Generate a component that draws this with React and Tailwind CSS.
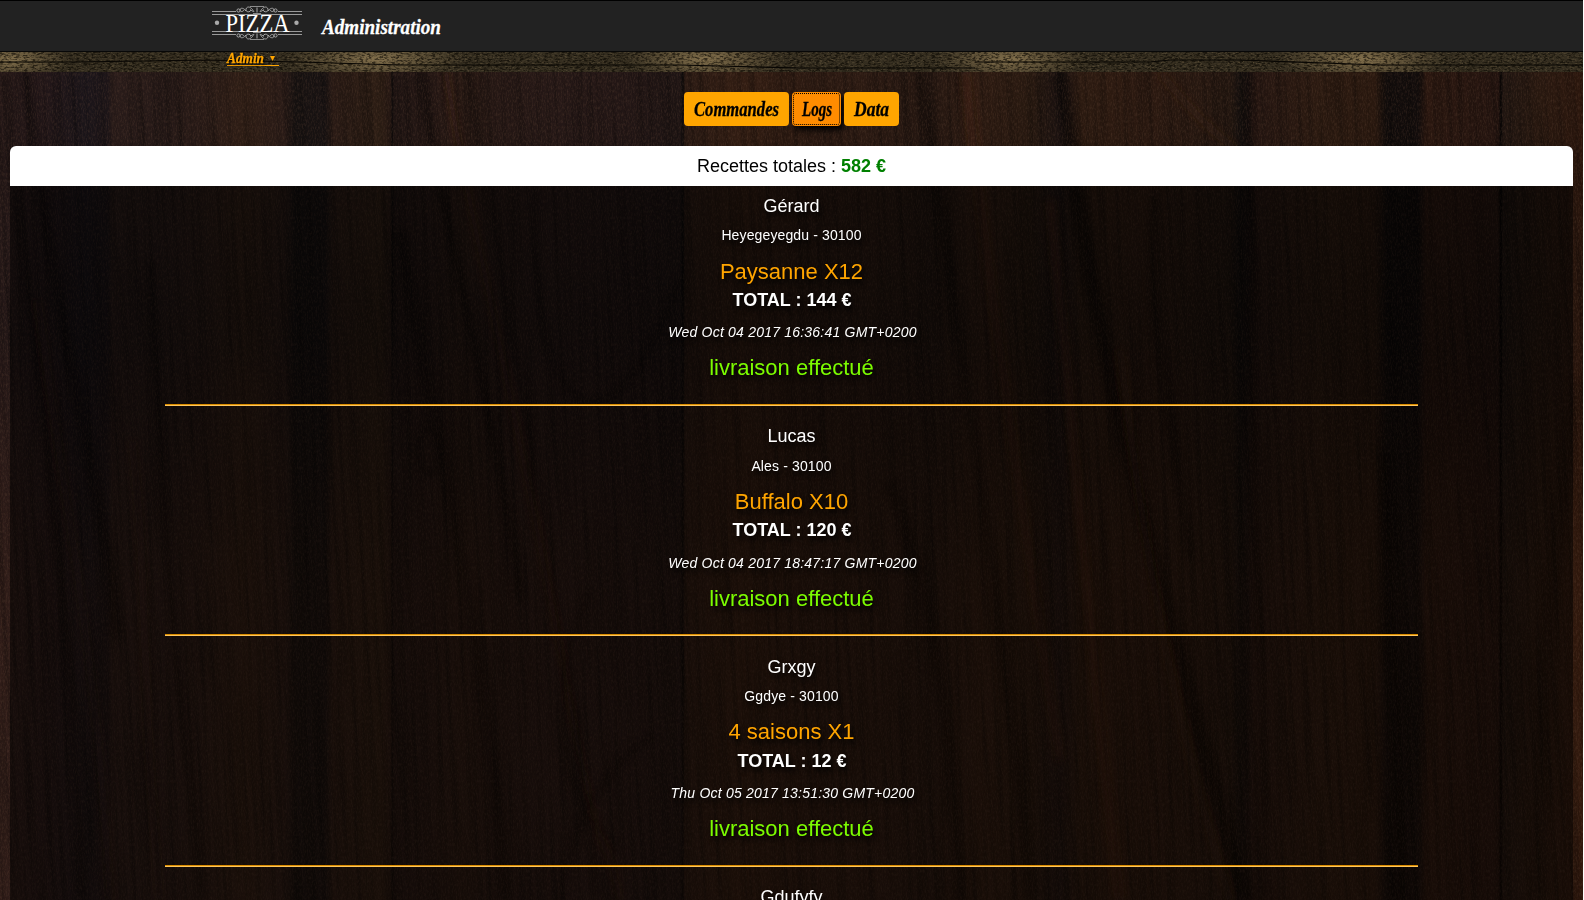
const orders = [
  { name: "Gérard", place: "Heyegeyegdu - 30100", item: "Paysanne X12", total: "144", date: "Wed Oct 04 2017 16:36:41 GMT+0200" },
  { name: "Lucas", place: "Ales - 30100", item: "Buffalo X10", total: "120", date: "Wed Oct 04 2017 18:47:17 GMT+0200" },
  { name: "Grxgy", place: "Ggdye - 30100", item: "4 saisons X1", total: "12", date: "Thu Oct 05 2017 13:51:30 GMT+0200" },
  { name: "Gdufyfy" },
];

// [x position in px, colour] across the planks
const planks = [
  [0, "#2c1d1c"], [45, "#24181a"], [85, "#1d171c"], [108, "#1e1619"], [112, "#2b1d1b"], [165, "#281b19"],
  [200, "#2c1d19"], [245, "#322017"], [285, "#2c1d19"], [295, "#181312"], [325, "#1a1414"], [333, "#2d1d17"],
  [380, "#302016"], [391, "#291a15"], [392, "#100c0c"], [394, "#211614"], [430, "#271916"], [460, "#2c1c16"],
  [500, "#271916"], [550, "#281a18"], [620, "#251817"], [680, "#201615"], [683, "#0d0a0a"], [685, "#2d1c15"],
  [740, "#351f14"], [820, "#2d1b13"], [870, "#2e1c14"], [930, "#261812"], [980, "#321e14"], [1030, "#291a11"],
  [1060, "#1f1513"], [1080, "#2e1c12"], [1110, "#2f1c12"], [1150, "#2e1b12"], [1230, "#251811"], [1240, "#15100e"],
  [1248, "#1b1210"], [1254, "#281813"], [1320, "#2e1c12"], [1375, "#2c1a10"], [1387, "#120d0c"], [1418, "#140e0d"],
  [1426, "#2d1911"], [1498, "#271611"], [1501, "#060404"], [1503, "#221712"], [1540, "#2b1a11"], [1583, "#2f190f"],
];

const streaks = [
  ["M5 72C20 300 60 420 82 900", 8, "#050406", 0.5],
  ["M25 72C60 360 100 480 118 640", 12, "#050406", 0.45],
  ["M38 300C60 480 96 640 110 900", 7, "#4a2a1a", 0.3],
  ["M150 260C160 500 180 700 205 900", 8, "#050304", 0.5],
  ["M132 440C150 600 140 700 160 900", 8, "#4a2a18", 0.25],
  ["M420 72C450 260 500 430 520 600", 8, "#050304", 0.6],
  ["M400 230C430 420 480 600 505 900", 14, "#050304", 0.4],
  ["M446 72C470 220 510 380 560 650S600 800 620 900", 6, "#4e2b1a", 0.4],
  ["M470 72C500 300 560 560 600 900", 6, "#050304", 0.4],
  ["M535 190C535 300 545 380 580 398S650 360 680 280", 7, "#030202", 0.4],
  ["M560 900C570 820 610 760 655 735", 9, "#030202", 0.4],
  ["M590 590C540 700 560 800 620 850", 8, "#030202", 0.35],
  ["M920 72C950 300 1000 560 1030 900", 12, "#050304", 0.45],
  ["M965 72C985 260 1020 500 1060 760", 9, "#5a2f18", 0.45],
  ["M890 480C930 600 950 700 960 900", 14, "#050304", 0.4],
  ["M1060 72C1090 280 1110 400 1170 620S1210 780 1245 900", 16, "#030202", 0.6],
  ["M1050 200C1080 500 1095 700 1120 900", 10, "#5e2f18", 0.45],
  ["M1120 350C1150 600 1180 740 1230 900", 7, "#55301a", 0.35],
  ["M1155 195C1145 300 1170 400 1190 560", 10, "#020101", 0.4],
  ["M1160 72C1190 110 1210 130 1235 148", 7, "#55301a", 0.35],
  ["M1384 450C1385 620 1405 700 1400 900", 10, "#020101", 0.5],
  ["M1248 72C1250 400 1264 620 1266 900", 5, "#020101", 0.6],
  ["M1580 380C1560 500 1540 600 1540 900", 16, "#030202", 0.3],
];

function Backdrop() {
  return (
    <svg className="absolute inset-0 h-[900px] w-[1583px]" viewBox="0 0 1583 900" aria-hidden="true">
      <defs>
        <linearGradient id="planks">
          {planks.map(([x, c]) => <stop key={x} offset={x / 1583} stopColor={c} />)}
        </linearGradient>
        <linearGradient id="fade" x2="0" y2="1">
          <stop offset="0" stopColor="#000" stopOpacity="0" />
          <stop offset=".35" stopColor="#000" stopOpacity=".2" />
          <stop offset=".65" stopColor="#3d1c0a" stopOpacity=".2" />
          <stop offset="1" stopColor="#3d1c0a" stopOpacity=".2" />
        </linearGradient>
        <filter id="soft" x="-50%" width="200%"><feGaussianBlur stdDeviation="3.5" /></filter>
        <filter id="grain" x="0" y="0" width="100%" height="100%" colorInterpolationFilters="sRGB">
          <feTurbulence type="fractalNoise" baseFrequency=".2 .006" numOctaves="3" seed="4" />
          <feColorMatrix values="0 0 0 0 0  0 0 0 0 0  0 0 0 0 0  2.2 0 0 0 -.9" />
        </filter>
        <filter id="pores" x="0" y="0" width="100%" height="100%" colorInterpolationFilters="sRGB">
          <feTurbulence type="fractalNoise" baseFrequency=".8 .3" numOctaves="2" seed="9" />
          <feColorMatrix values="0 0 0 0 .5  0 0 0 0 .36  0 0 0 0 .28  0 1.2 0 0 -.5" />
        </filter>
      </defs>
      <rect width="1583" height="900" fill="url(#planks)" />
      <g fill="none" filter="url(#soft)" opacity=".75">
        {streaks.map(([d, w, c, o]) => <path key={d} d={d} strokeWidth={w} stroke={c} opacity={o} />)}
        <ellipse cx="429" cy="450" rx="10" ry="24" stroke="#000" strokeWidth="6" opacity=".5" />
      </g>
      <rect width="1583" height="900" fill="url(#fade)" />
      <g transform="rotate(-3 790 450)"><rect x="-60" y="-80" width="1720" height="1060" filter="url(#grain)" opacity=".32" /></g>
      <rect width="1583" height="900" filter="url(#pores)" opacity=".42" />
    </svg>
  );
}

const glows = [[10, 60], [376, 90], [705, 80], [1010, 75], [1362, 85]];

function WoodStrip() {
  return (
    <svg className="absolute inset-0 h-5 w-[1583px]" viewBox="0 0 1583 20" aria-hidden="true">
      <defs>
        <radialGradient id="glow">
          <stop offset="0" stopColor="#8a7650" stopOpacity=".9" />
          <stop offset="1" stopColor="#8a7650" stopOpacity="0" />
        </radialGradient>
        <filter id="bark" x="0" y="0" width="100%" height="100%" colorInterpolationFilters="sRGB">
          <feTurbulence type="fractalNoise" baseFrequency=".25 .6" numOctaves="3" seed="3" />
          <feColorMatrix values="0 0 0 0 .03  0 0 0 0 .02  0 0 0 0 0  4 0 0 0 -1.75" />
        </filter>
        <filter id="flecks" x="0" y="0" width="100%" height="100%" colorInterpolationFilters="sRGB">
          <feTurbulence type="fractalNoise" baseFrequency=".4 .7" numOctaves="2" seed="12" />
          <feColorMatrix values="0 0 0 0 .56  0 0 0 0 .48  0 0 0 0 .34  0 3 0 0 -1.5" />
        </filter>
      </defs>
      <rect width="1583" height="20" fill="#352e20" />
      {glows.map(([x, r]) => <ellipse key={x} cx={x} cy="7" rx={r} ry="22" fill="url(#glow)" />)}
      <rect width="1583" height="20" filter="url(#bark)" opacity=".6" />
      <rect width="1583" height="20" filter="url(#flecks)" opacity=".35" />
      <path d="M0 10H75L210 8 300 10 400 13 528 13M528 13 680 13 800 16 975 16M975 10 1150 10 1170 8 1240 8 1380 13 1583 13" fill="none" stroke="#080603" strokeWidth="1.2" />
    </svg>
  );
}

function Flourish() {
  return (
    <g fill="none" stroke="#a8a8a8" strokeWidth="1">
      <path d="M45 2.5v5M42 7C39 1 35 1 34 4s4 4 5 1M48 7c3-6 7-6 8-3s-4 4-5 1" />
      <path d="M34 6C31 2 28 3 28 5s3 2 4 0M56 6c3-4 6-3 6-1s-3 2-4 0" />
      <circle cx="26.5" cy="5.5" r="1.6" /><circle cx="63.5" cy="5.5" r="1.6" />
      <path d="M38 1.5h14M41 8.5h8M38 4.5l3 2M52 4.5l-3 2" strokeWidth=".8" />
    </g>
  );
}

function Logo() {
  return (
    <svg className="h-9 w-[90px]" viewBox="0 0 90 36" aria-label="Pizza">
      <path d="M0 6.5h24M66 6.5h24M0 9.5h90M0 26.5h90M0 29.5h24M66 29.5h24" stroke="#999" fill="none" />
      <Flourish />
      <g transform="matrix(1 0 0 -1 0 36)"><Flourish /></g>
      <circle cx="5" cy="17.8" r="2.2" fill="#aaa" /><circle cx="84.5" cy="17.8" r="2.2" fill="#aaa" />
      <text x="13.5" y="26.5" textLength="64" lengthAdjust="spacingAndGlyphs" fill="#fff" fontSize="26" fontFamily="'Liberation Serif', serif">PIZZA</text>
    </svg>
  );
}

function ScriptText({ text, width, size }) {
  return (
    <svg className="block h-[30px] overflow-visible" style={{ width }} aria-label={text}>
      <text y="21" textLength={width} lengthAdjust="spacingAndGlyphs" fill="currentColor" stroke="currentColor" strokeWidth=".3" fontSize={size} fontWeight="700" fontStyle="italic" fontFamily="'Liberation Serif', serif">{text}</text>
    </svg>
  );
}

const tabs = [
  { label: "Commandes", width: 85, box: "w-[105px] bg-[#ffa500]" },
  { label: "Logs", width: 30, box: "w-[49px] bg-[#ff8c00] shadow-[3px_4px_6px_#000] outline-1 -outline-offset-2 outline-dotted outline-black" },
  { label: "Data", width: 35, box: "w-[55px] bg-[#ffa500]" },
];

function Order({ order }) {
  return (
    <article className="flex flex-col items-center whitespace-nowrap text-white [text-shadow:2px_4px_5px_#000]">
      <h4 className="text-[18px] leading-5">{order.name}</h4>
      {order.place && (
        <>
          <p className="mt-[9.5px] text-sm leading-5 tracking-[0.13px]">{order.place}</p>
          <p className="mt-[14.3px] text-[22px] leading-6 text-[#ffa500]">{order.item}</p>
          <p className="mt-[6.2px] pl-px text-[18px] leading-5 font-bold">TOTAL : {order.total} €</p>
          <p className="mt-[12.4px] pl-0.5 text-sm leading-5 tracking-[0.21px] italic">{order.date}</p>
          <p className="mt-[14.3px] text-[22px] leading-6 text-[#7cfc00]">livraison effectué</p>
          <hr className="mt-[23.4px] mb-[20.3px] h-0.5 w-[1253px] border-t border-b border-t-[#d98c00] border-b-[#ffc65c]" />
        </>
      )}
    </article>
  );
}

export default function App() {
  return (
    <div className="h-[900px] w-full overflow-hidden bg-white font-['Liberation_Sans',Arial,sans-serif]">
      <div className="relative h-[900px] w-[1583px] overflow-hidden bg-[#1d1310]">
        <Backdrop />
        <div className="relative flex h-full flex-col">
          <header className="flex h-[52px] shrink-0 items-start border-t border-b border-t-black border-b-[#080808] bg-[#222] pl-[212px]">
            <div className="pt-1"><Logo /></div>
            <h1 className="pt-3 pl-5 text-white"><ScriptText text="Administration" width={119} size={22} /></h1>
          </header>
          <nav className="relative h-5 shrink-0">
            <WoodStrip />
            <a className="relative ml-[227px] flex h-3.5 w-[52px] items-center justify-between border-b border-[#ffa500] pr-1 text-[#ffa500]">
              <span className="-mt-[3px] [filter:drop-shadow(1px_1px_1px_#000)]"><ScriptText text="Admin" width={37} size={14.5} /></span>
              <svg className="h-[5px] w-[5px]" viewBox="0 0 5 5"><path d="M0 0h5L2.5 5z" fill="currentColor" /></svg>
            </a>
          </nav>
          <div className="mt-5 flex shrink-0 justify-center gap-[3px] text-black">
            {tabs.map((t) => (
              <button key={t.label} className={"flex h-[34px] items-center justify-center rounded pt-px " + t.box}>
                <ScriptText text={t.label} width={t.width} size={20} />
              </button>
            ))}
          </div>
          <main className="mx-2.5 mt-5 flex-1 overflow-hidden rounded-t-md bg-black/50">
            <h2 className="flex h-10 items-center justify-center gap-[5px] bg-white text-[18px] text-black">
              Recettes totales : <b className="text-[#008000]">582 €</b>
            </h2>
            <section className="pt-[9.8px]">
              {orders.map((o) => <Order key={o.name} order={o} />)}
            </section>
          </main>
        </div>
      </div>
    </div>
  );
}
